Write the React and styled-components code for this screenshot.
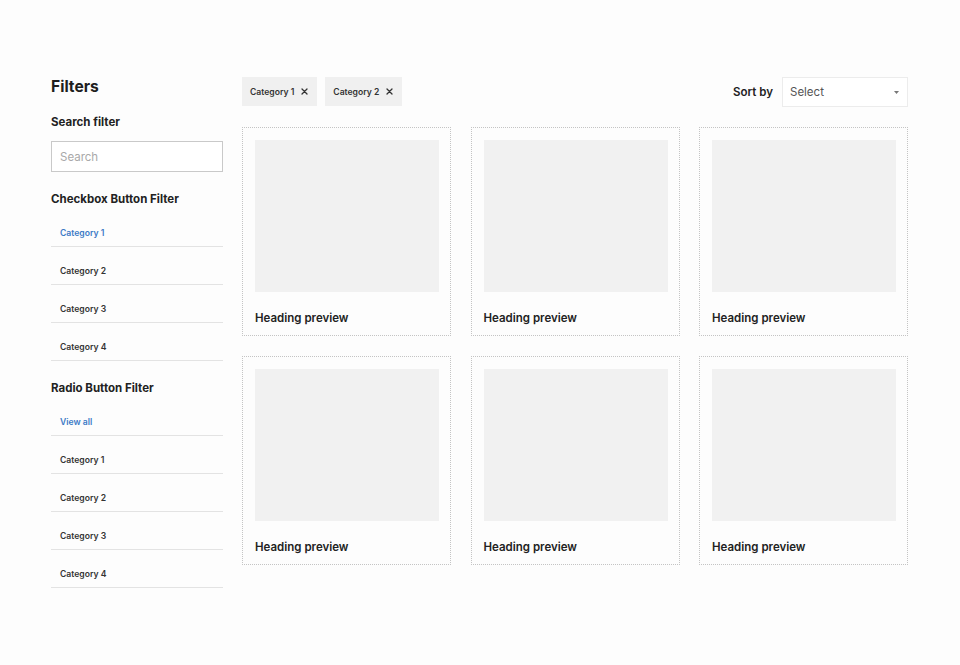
import React from "react";
import styled, { createGlobalStyle } from "styled-components";

const Global = createGlobalStyle`
  html, body { margin: 0; padding: 0; background: #fdfdfd; }
  body { font-family: Inter, "Noto Sans", sans-serif; color: #222; }
  * { box-sizing: border-box; }
`;

const Page = styled.div`
  display: flex;
  gap: 19px;
  padding: 77px 52px 0 51px;
  width: 960px;
  height: 665px;
`;

const Sidebar = styled.aside`
  width: 172px;
  flex-shrink: 0;
  display: flex;
  flex-direction: column;
`;

const Title = styled.h1`
  margin: 0 0 17px;
  font-size: 15.6px;
  line-height: 20px;
  font-weight: 700;
  color: #1e1e1e;
`;

const SectionHeading = styled.h2`
  margin: ${(p) => p.$top || 0}px 0 0;
  font-size: 11.5px;
  line-height: 16px;
  font-weight: 700;
  color: #222;
`;

const SearchInput = styled.input`
  margin-top: 11px;
  height: 31px;
  width: 100%;
  border: 1px solid #c9c9c9;
  background: #fff;
  padding: 0 8px;
  font-family: inherit;
  font-size: 11.5px;
  color: #222;
  outline: none;
  &::placeholder { color: #a9a9a9; }
`;

const List = styled.ul`
  list-style: none;
  margin: 2px 0 0;
  padding: 0;
`;

const Item = styled.li`
  margin-top: 10px;
  padding: 0 9px;
  height: 28px;
  display: flex;
  align-items: center;
  border-bottom: 1px solid #e3e3e3;
  font-size: 8.6px;
  font-weight: 600;
  color: ${(p) => (p.$active ? "#3b7ac6" : "#333")};
`;

const Main = styled.main`
  flex: 1;
  display: flex;
  flex-direction: column;
  gap: 20px;
`;

const TopBar = styled.div`
  display: flex;
  align-items: flex-start;
  justify-content: space-between;
  height: 30px;
`;

const Chips = styled.div`
  display: flex;
  gap: 8px;
`;

const Chip = styled.div`
  display: flex;
  align-items: center;
  gap: 7px;
  height: 29px;
  padding: 0 9px 0 8px;
  background: #f0f0f0;
  font-size: 8.6px;
  font-weight: 600;
  color: #333;
`;

const Sort = styled.div`
  display: flex;
  align-items: center;
  gap: 9px;
`;

const SortLabel = styled.span`
  font-size: 11.5px;
  font-weight: 600;
  color: #222;
`;

const Select = styled.div`
  width: 126px;
  height: 30px;
  border: 1px solid #ececec;
  background: #fff;
  display: flex;
  align-items: center;
  justify-content: space-between;
  padding: 0 8px 0 7px;
  font-size: 11.5px;
  color: #555;
`;

const Grid = styled.div`
  display: grid;
  grid-template-columns: repeat(3, 209px);
  column-gap: 19.5px;
  row-gap: 20px;
`;

const Card = styled.div`
  height: 209px;
  border: 1px dotted #c4c4c4;
  padding: 12px 11px 9px 12px;
  display: flex;
  flex-direction: column;
`;

const Thumb = styled.div`
  height: 152px;
  background: #f1f1f1;
`;

const CardHeading = styled.div`
  margin-top: 18px;
  font-size: 11.5px;
  line-height: 16px;
  font-weight: 600;
  color: #222;
`;

const Close = () => (
  <svg width="7" height="7" viewBox="0 0 7 7">
    <path d="M1 1L6 6M6 1L1 6" stroke="#333" strokeWidth="1.3" strokeLinecap="round" />
  </svg>
);

const Caret = () => (
  <svg width="5" height="3" viewBox="0 0 5 3">
    <path d="M0 0H5L2.5 3Z" fill="#777" />
  </svg>
);

const cats = ["Category 1", "Category 2", "Category 3", "Category 4"];

export default function App() {
  return (
    <>
      <Global />
      <Page>
        <Sidebar>
          <Title>Filters</Title>
          <SectionHeading>Search filter</SectionHeading>
          <SearchInput placeholder="Search" />
          <SectionHeading $top={19}>Checkbox Button Filter</SectionHeading>
          <List>
            {cats.map((c, i) => (
              <Item key={c} $active={i === 0}>{c}</Item>
            ))}
          </List>
          <SectionHeading $top={19}>Radio Button Filter</SectionHeading>
          <List>
            <Item $active>View all</Item>
            {cats.map((c) => (
              <Item key={c}>{c}</Item>
            ))}
          </List>
        </Sidebar>
        <Main>
          <TopBar>
            <Chips>
              <Chip>Category 1 <Close /></Chip>
              <Chip>Category 2 <Close /></Chip>
            </Chips>
            <Sort>
              <SortLabel>Sort by</SortLabel>
              <Select>
                <span>Select</span>
                <Caret />
              </Select>
            </Sort>
          </TopBar>
          <Grid>
            {Array.from({ length: 6 }).map((_, i) => (
              <Card key={i}>
                <Thumb />
                <CardHeading>Heading preview</CardHeading>
              </Card>
            ))}
          </Grid>
        </Main>
      </Page>
    </>
  );
}
